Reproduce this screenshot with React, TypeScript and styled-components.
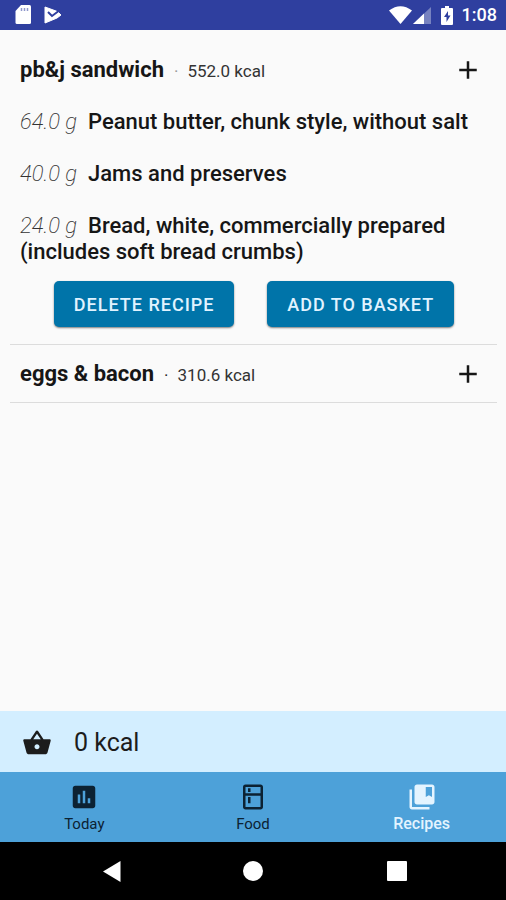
import React from "react";
import styled, { createGlobalStyle } from "styled-components";
import {
  MdAdd,
  MdAssessment,
  MdCollectionsBookmark,
  MdOutlineKitchen,
  MdShoppingBasket,
} from "react-icons/md";

const GlobalStyle = createGlobalStyle`
  *, *::before, *::after { box-sizing: border-box; }
  body {
    margin: 0;
    background: #fafafa;
    color: #161616;
    font-family: Roboto, "Liberation Sans", sans-serif;
  }
  button { font-family: inherit; cursor: pointer; }
`;

const Screen = styled.div`
  display: flex;
  flex-direction: column;
  min-height: 100vh;
`;

const StatusBar = styled.header`
  display: flex;
  align-items: center;
  justify-content: space-between;
  height: 30px;
  padding: 0 9px 0 15px;
  background: #2f3f9f;
  color: #fff;
`;

const StatusGroup = styled.div<{ $gap: number }>`
  display: flex;
  align-items: center;
  gap: ${(p) => p.$gap}px;

  svg { display: block; }
`;

const Battery = styled.svg`
  margin: 0 8px 0 9px;
`;

const Clock = styled.time`
  font-size: 18px;
  font-weight: 500;
  line-height: 30px;
`;

const RecipeList = styled.main`
  flex: 1;
  padding: 11px 9px 0 10px;
`;

const Recipe = styled.section`
  border-bottom: 1px solid #dcdcdc;
`;

const RecipeHeader = styled.div`
  display: flex;
  align-items: center;
  justify-content: space-between;
  height: 57px;
  padding: 0 14px 0 10px;
`;

const RecipeTitle = styled.h2`
  margin: 0;
  padding-top: 2px;
  font-size: 22px;
  font-weight: 700;
  line-height: 26px;
`;

const Energy = styled.span<{ $faded?: boolean }>`
  font-size: 17px;
  font-weight: 400;
  color: #333;

  &::before {
    content: "·";
    margin: 0 9px 0 10px;
    color: ${(p) => (p.$faded ? "#999" : "#222")};
  }
`;

const ExpandButton = styled.button`
  display: flex;
  padding: 0;
  border: 0;
  background: none;
  color: #161616;
`;

const Ingredients = styled.ul`
  display: flex;
  flex-direction: column;
  gap: 26px;
  margin: 0;
  padding: 11px 10px 16px;
  list-style: none;
  font-size: 22px;
  font-weight: 500;
  line-height: 26px;
`;

const Amount = styled.em`
  margin-right: 11px;
  font-weight: 200;
  color: #333;
`;

const Actions = styled.div`
  display: flex;
  justify-content: space-evenly;
  padding: 0 10px 17px 11px;
`;

const ActionButton = styled.button`
  height: 46px;
  padding: 0 20px;
  border: 0;
  border-radius: 5px;
  background: #0074a9;
  box-shadow: 0 1px 2px rgba(0, 0, 0, 0.5);
  color: #e1f3ff;
  font-size: 18px;
  font-weight: 500;
  letter-spacing: 1px;
  text-transform: uppercase;
`;

const BasketBar = styled.section`
  display: flex;
  align-items: center;
  gap: 22px;
  height: 61px;
  padding: 2px 22px 0;
  background: #d3eeff;
  color: #1c1c1c;
  font-size: 25px;
`;

const Tabs = styled.nav`
  display: grid;
  grid-template-columns: repeat(3, 1fr);
  height: 70px;
  background: #4da1d9;
`;

const Tab = styled.button<{ $active?: boolean }>`
  display: flex;
  flex-direction: column;
  align-items: center;
  gap: 3px;
  padding: 10px 0 0;
  border: 0;
  background: none;
  color: ${(p) => (p.$active ? "#e4f4ff" : "#0c2233")};
  font-size: ${(p) => (p.$active ? 16 : 15)}px;
  font-weight: ${(p) => (p.$active ? 500 : 400)};
  line-height: 18px;
`;

const SystemBar = styled.footer`
  display: grid;
  grid-template-columns: 1fr 20px 1fr;
  align-items: center;
  height: 58px;
  background: #000;
`;

const SystemButton = styled.button<{ $side?: "left" | "right" }>`
  display: flex;
  justify-self: center;
  padding: 0;
  margin: ${(p) =>
    p.$side === "left" ? "0 0 0 -20px" : p.$side === "right" ? "0 0 0 24px" : "0"};
  border: 0;
  background: none;
`;

type RecipeData = {
  name: string;
  energy: string;
  faded?: boolean;
  ingredients: { amount: string; name: string }[];
};

const recipes: RecipeData[] = [
  {
    name: "pb&j sandwich",
    energy: "552.0 kcal",
    faded: true,
    ingredients: [
      { amount: "64.0 g", name: "Peanut butter, chunk style, without salt" },
      { amount: "40.0 g", name: "Jams and preserves" },
      {
        amount: "24.0 g",
        name: "Bread, white, commercially prepared (includes soft bread crumbs)",
      },
    ],
  },
  { name: "eggs & bacon", energy: "310.6 kcal", ingredients: [] },
];

const tabs = [
  { label: "Today", Icon: MdAssessment },
  { label: "Food", Icon: MdOutlineKitchen },
  { label: "Recipes", Icon: MdCollectionsBookmark, active: true },
];

export default function App() {
  return (
    <Screen>
      <GlobalStyle />
      <StatusBar>
        <StatusGroup $gap={12}>
          <svg width="17" height="20" viewBox="0 0 17 20" aria-hidden="true">
            <path
              d="M6 0h8.500a1.500 1.500 0 0 1 1.500 1.500v16a1.500 1.500 0 0 1-1.500 1.500H2a1.500 1.500 0 0 1-1.500-1.500V6z"
              fill="#fff"
            />
            <path d="M6.500 3v3M9.500 3v3M12.500 3v3" stroke="#8f98cc" strokeWidth="1.500" />
          </svg>
          <svg width="18" height="18" viewBox="0 0 18 18" aria-hidden="true">
            <path
              d="M1 1 12 5l2 1 3 3-4 3L1 17z"
              fill="#fff"
              stroke="#fff"
              strokeWidth="1"
              strokeLinejoin="round"
            />
            <path d="m4 6 4 4 8-6" fill="none" stroke="#2f3f9f" strokeWidth="2" />
          </svg>
        </StatusGroup>
        <StatusGroup $gap={1}>
          <svg width="23" height="18" viewBox="0 0 23 18" aria-hidden="true">
            <path d="M0 4.500Q11.500-4 23 4.500L11.500 18z" fill="#fff" />
          </svg>
          <svg width="18" height="17" viewBox="0 0 18 17" aria-hidden="true">
            <path d="M18 0v17H0z" fill="#7782c0" />
            <path d="M11 6.600V17H0z" fill="#fff" />
          </svg>
          <Battery width="12" height="19" viewBox="0 0 12 19" aria-hidden="true">
            <path
              d="M4 0h4v2h3q1 0 1 1v15q0 1-1 1H1q-1 0-1-1V3q0-1 1-1h3z"
              fill="#fff"
            />
            <path d="M7 5 3 11h2.500v5l4-6.500H7z" fill="#2f3f9f" />
          </Battery>
          <Clock>1:08</Clock>
        </StatusGroup>
      </StatusBar>

      <RecipeList>
        {recipes.map((recipe) => (
          <Recipe key={recipe.name}>
            <RecipeHeader>
              <RecipeTitle>
                {recipe.name}
                <Energy $faded={recipe.faded}>{recipe.energy}</Energy>
              </RecipeTitle>
              <ExpandButton type="button" aria-label={`Add ${recipe.name}`}>
                <MdAdd size={30} />
              </ExpandButton>
            </RecipeHeader>
            {recipe.ingredients.length > 0 && (
              <>
                <Ingredients>
                  {recipe.ingredients.map((item) => (
                    <li key={item.name}>
                      <Amount>{item.amount}</Amount>
                      {item.name}
                    </li>
                  ))}
                </Ingredients>
                <Actions>
                  <ActionButton type="button">Delete recipe</ActionButton>
                  <ActionButton type="button">Add to basket</ActionButton>
                </Actions>
              </>
            )}
          </Recipe>
        ))}
      </RecipeList>

      <BasketBar>
        <MdShoppingBasket size={30} />
        <span>0 kcal</span>
      </BasketBar>

      <Tabs>
        {tabs.map(({ label, Icon, active }) => (
          <Tab
            key={label}
            type="button"
            $active={active}
            aria-current={active ? "page" : undefined}
          >
            <Icon size={30} />
            {label}
          </Tab>
        ))}
      </Tabs>

      <SystemBar>
        <SystemButton type="button" $side="left" aria-label="Back">
          <svg width="18" height="21" viewBox="0 0 18 21">
            <path d="M17.500 0v21L0 10.500z" fill="#fff" />
          </svg>
        </SystemButton>
        <SystemButton type="button" aria-label="Home">
          <svg width="20" height="20" viewBox="0 0 20 20">
            <circle cx="10" cy="10" r="10" fill="#fff" />
          </svg>
        </SystemButton>
        <SystemButton type="button" $side="right" aria-label="Overview">
          <svg width="20" height="20" viewBox="0 0 20 20">
            <rect width="20" height="20" rx="1" fill="#fff" />
          </svg>
        </SystemButton>
      </SystemBar>
    </Screen>
  );
}
